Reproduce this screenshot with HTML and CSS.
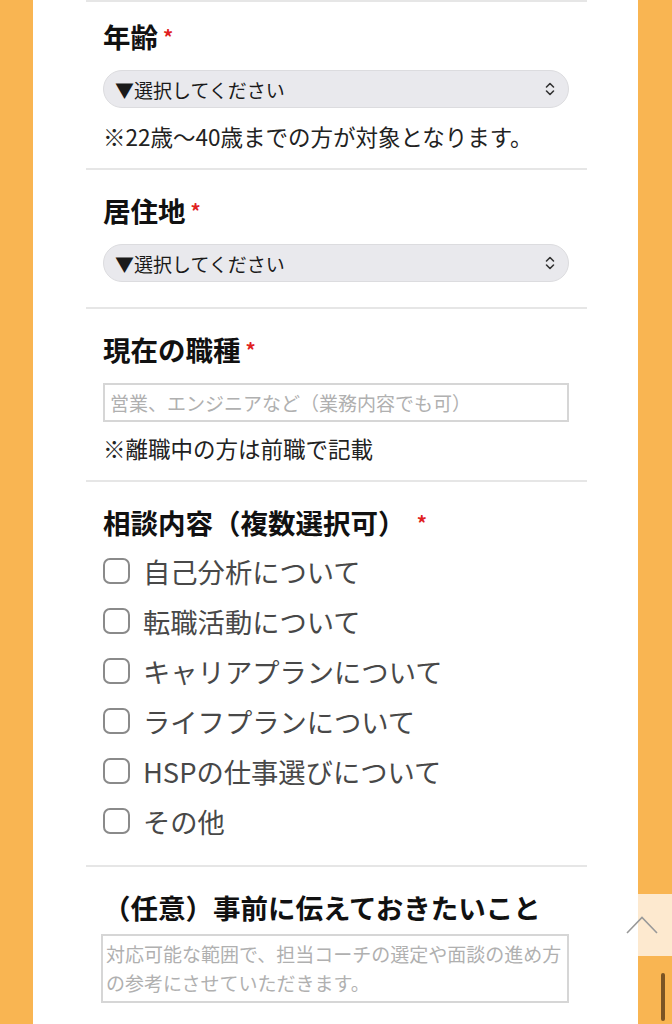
FILE: index.html
```html
<!DOCTYPE html>
<html lang="ja">
<head>
    <meta charset="UTF-8">
    <meta name="viewport" content="width=device-width, initial-scale=1.0">
    <title>無料相談フォーム</title>
    <link rel="stylesheet" href="styles.css">
</head>
<body>
    <div class="card">
        <form class="form">
            <!-- 年齢 -->
            <div class="section">
                <p class="label">年齢<span class="req">*</span></p>
                <div class="select-wrap">
                    <select class="select">
                        <option>▼選択してください</option>
                    </select>
                    <svg class="select-arrow" viewBox="0 0 10 16" width="10" height="16"><path d="M1.5 6 L5 2.5 L8.5 6 M1.5 10 L5 13.5 L8.5 10" fill="none" stroke="#333" stroke-width="1.6" stroke-linecap="round" stroke-linejoin="round"/></svg>
                </div>
                <p class="note">※22歳〜40歳までの方が対象となります。</p>
            </div>

            <!-- 居住地 -->
            <div class="section section-select">
                <p class="label">居住地<span class="req">*</span></p>
                <div class="select-wrap">
                    <select class="select">
                        <option>▼選択してください</option>
                    </select>
                    <svg class="select-arrow" viewBox="0 0 10 16" width="10" height="16"><path d="M1.5 6 L5 2.5 L8.5 6 M1.5 10 L5 13.5 L8.5 10" fill="none" stroke="#333" stroke-width="1.6" stroke-linecap="round" stroke-linejoin="round"/></svg>
                </div>
            </div>

            <!-- 現在の職種 -->
            <div class="section">
                <p class="label">現在の職種<span class="req">*</span></p>
                <input type="text" class="input" placeholder="営業、エンジニアなど（業務内容でも可）">
                <p class="note note-input">※離職中の方は前職で記載</p>
            </div>

            <!-- 相談内容 -->
            <div class="section section-checks">
                <p class="label">相談内容（複数選択可） <span class="req">*</span></p>
                <ul class="checks">
                    <li><label class="check"><input type="checkbox"><span>自己分析について</span></label></li>
                    <li><label class="check"><input type="checkbox"><span>転職活動について</span></label></li>
                    <li><label class="check"><input type="checkbox"><span>キャリアプランについて</span></label></li>
                    <li><label class="check"><input type="checkbox"><span>ライフプランについて</span></label></li>
                    <li><label class="check"><input type="checkbox"><span>HSPの仕事選びについて</span></label></li>
                    <li><label class="check"><input type="checkbox"><span>その他</span></label></li>
                </ul>
            </div>

            <!-- 任意 -->
            <div class="section section-text">
                <p class="label">（任意）事前に伝えておきたいこと</p>
                <textarea class="textarea" placeholder="対応可能な範囲で、担当コーチの選定や面談の進め方&#10;の参考にさせていただきます。"></textarea>
            </div>
        </form>
    </div>

    <a href="#" class="to-top">
        <svg class="to-top-icon" viewBox="0 0 32 18" width="32" height="18"><path d="M1 17 L16 1.5 L31 17" fill="none" stroke="#999" stroke-width="1.6"/></svg>
    </a>
    <div class="scroll-thumb"></div>
</body>
</html>
```

FILE: styles.css
```css
html, body {
    height: 100%;
    overflow: hidden;
}
body {
    margin: 0;
    background-color: #f9b552;
    font-family: "Noto Sans CJK JP", "Noto Sans", sans-serif;
    color: #222;
}
p, ul {
    margin: 0;
    padding: 0;
}

/* 白いカード */
.card {
    margin: 0 34px 0 33px;
    padding: 0 51px 0 53px;
    min-height: 100vh;
    background-color: #fff;
}

.section {
    border-top: 2px solid #e6e6e6;
    padding: 22px 18px 16px 17px;
}
.section:first-child {
    padding-top: 16px;
}
.section:first-child .note {
    margin-top: 12px;
}

.label {
    font-size: 27.5px;
    line-height: 36px;
    font-weight: 700;
    color: #111;
    margin-bottom: 15px;
}
.req {
    margin-left: 5px;
    font-size: 20px;
    color: #e02020;
    vertical-align: 3px;
}

/* セレクト */
.select-wrap {
    position: relative;
}
.select {
    display: block;
    width: 100%;
    height: 38px;
    margin: 0;
    padding: 0 30px 0 11px;
    -webkit-appearance: none;
    appearance: none;
    border: 1px solid #dcdcdf;
    border-radius: 19px;
    background-color: #e9e9ed;
    font-family: inherit;
    font-size: 19px;
    color: #1a1a1a;
    outline: none;
}
.select-arrow {
    position: absolute; /*セレクトの上に重ねる*/
    right: 14px;
    top: 11px;
    pointer-events: none;
}
.section-select .select-wrap {
    margin-bottom: 9px;
}

.note {
    margin-top: 13px;
    font-size: 22.5px;
    line-height: 32px;
    color: #222;
}
.note.note-input {
    margin-top: 10px;
}

/* テキスト入力 */
.input {
    display: block;
    box-sizing: border-box;
    width: 100%;
    height: 39px;
    margin: 0;
    padding: 0 5px;
    border: 2px solid #d6d6d6;
    border-radius: 0;
    font-family: inherit;
    font-size: 19px;
    outline: none;
}
.input::placeholder,
.textarea::placeholder {
    color: #b0b0b0;
}

/* チェックボックス */
.section-checks .label {
    margin-bottom: 5px;
}
.checks {
    list-style: none;
    margin-bottom: 3px;
}
.check {
    display: flex;
    align-items: center;
    height: 50px;
    gap: 13px;
    font-size: 27.3px;
    color: #484848;
}
.check input {
    -webkit-appearance: none;
    appearance: none;
    flex: none;
    box-sizing: border-box;
    width: 27px;
    height: 26px;
    margin: 0;
    border: 2px solid #8a8a8a;
    border-radius: 7px;
    background-color: #fff;
}

/* テキストエリア */
.section-text .label {
    margin-bottom: 9px;
}
.textarea {
    display: block;
    box-sizing: border-box;
    width: calc(100% + 2px);
    height: 69px;
    margin: 0 0 0 -2px;
    padding: 3px 0 3px 3px;
    border: 2px solid #d6d6d6;
    font-family: inherit;
    font-size: 19px;
    line-height: 29px;
    white-space: pre; /*プレースホルダーを改行位置どおりに*/
    resize: none;
    outline: none;
    overflow: hidden;
}

/* ページトップボタン */
.to-top {
    position: fixed;
    right: 0;
    top: 894px;
    width: 34px;
    height: 62px;
    background-color: #fde9cf;
}
.to-top-icon {
    position: absolute;
    left: -12px;
    top: 22px;
}
.scroll-thumb {
    position: fixed;
    left: 661px;
    top: 973px;
    width: 4px;
    height: 48px;
    border-radius: 2px;
    background-color: #7b5424;
}
```
